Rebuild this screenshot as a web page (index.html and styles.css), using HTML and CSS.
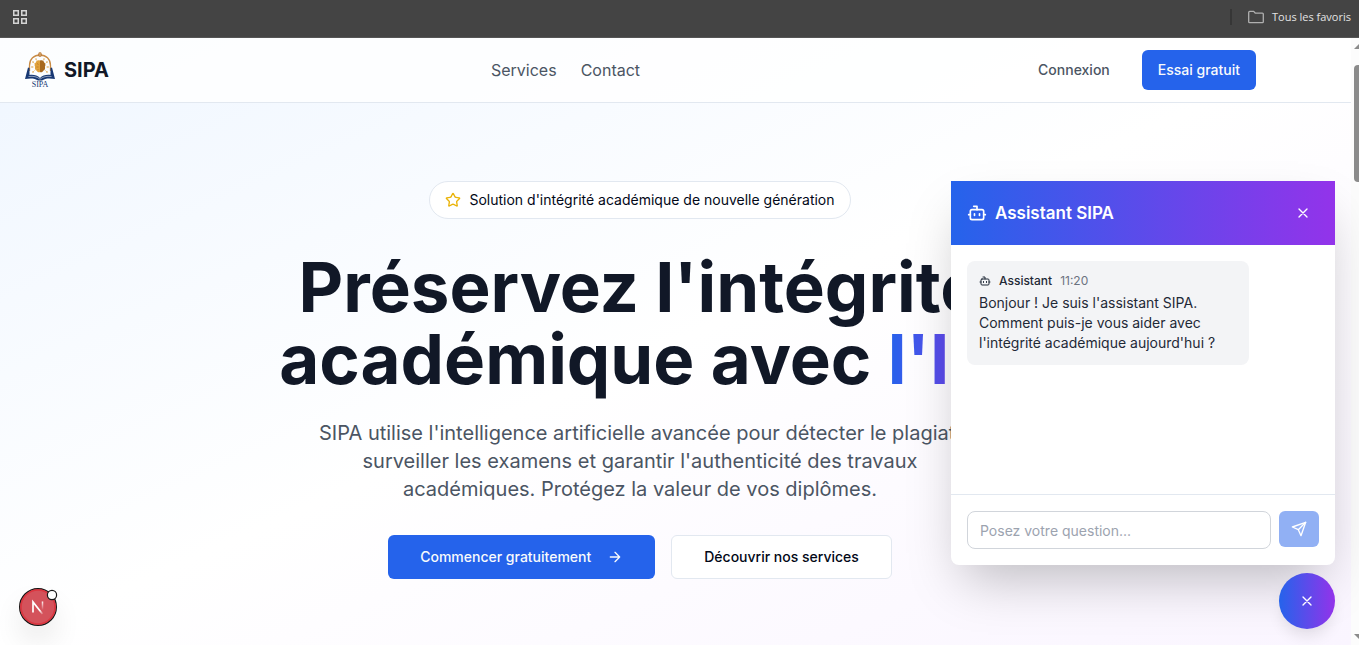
FILE: index.html
```html
<!DOCTYPE html>
<html lang="fr">
<head>
    <meta charset="UTF-8">
    <meta name="viewport" content="width=device-width, initial-scale=1.0">
    <title>SIPA</title>
    <link rel="stylesheet" href="styles.css">
</head>
<body>

<!-- Barre de favoris -->
<div class="bookmarks">
    <button class="bookmark-btn" type="button" aria-label="Groupes d'onglets">
        <svg width="16" height="16" viewBox="0 0 16 16" fill="none" stroke="#d4d4d4" stroke-width="1.5">
            <rect x="1.75" y="1.75" width="4.5" height="4.5"/>
            <rect x="9.75" y="1.75" width="4.5" height="4.5"/>
            <rect x="1.75" y="9.75" width="4.5" height="4.5"/>
            <rect x="9.75" y="9.75" width="4.5" height="4.5"/>
        </svg>
    </button>
    <button class="bookmark-btn bookmark-all" type="button">
        <svg width="16" height="16" viewBox="0 0 16 16" fill="none" stroke="#b0b0b0" stroke-width="1.3" stroke-linejoin="round">
            <path d="M.7 3.4q0-1 1-1h4l1.700 1.800h7q.9 0 .9.900v7.600q0 .9-.9.900H1.600q-.9 0-.9-.900z"/>
        </svg>
        Tous les favoris
    </button>
</div>

<div class="viewport">
    <div class="page">
        <header class="site-header">
            <div class="container header-inner">
                <a class="brand" href="#">
                    <svg class="logo" width="32" height="40" viewBox="0 0 32 40" fill="none">
                        <path d="M5.500 21V15.500C5.500 9 10 5 16 5s10.500 4 10.500 10.500V21" stroke="#c98b45" stroke-width="1.300"/>
                        <ellipse cx="16" cy="4.500" rx="1.800" ry="2.500" fill="#b8783a"/>
                        <path d="M16 2.500v4" stroke="#f0cf94" stroke-width=".8"/>
                        <path d="M9 12l2 2M8 17h2M9 22l2-2M23 12l-2 2M24 17h-2M23 22l-2-2M12 9l1 2M20 9l-1 2" stroke="#e6b96f" stroke-width=".5"/>
                        <g fill="#dda044">
                            <circle cx="9" cy="12" r=".8"/><circle cx="8" cy="17" r=".8"/><circle cx="9" cy="22" r=".8"/>
                            <circle cx="23" cy="12" r=".8"/><circle cx="24" cy="17" r=".8"/><circle cx="23" cy="22" r=".8"/>
                            <circle cx="12" cy="9" r=".7"/><circle cx="20" cy="9" r=".7"/>
                        </g>
                        <path d="M16 10.500c-2-1-4 .3-4.200 2-1.500 1-1.500 3-.7 4.200-.7 1.800.3 3.600 1.700 4 .7 1.500 2.200 1.800 3.200 1.300z" fill="#e0a13c"/>
                        <path d="M16 10.500c2-1 4 .3 4.200 2 1.500 1 1.500 3 .7 4.200.7 1.800-.3 3.600-1.700 4-.7 1.500-2.200 1.800-3.200 1.300z" fill="#a8691f"/>
                        <path d="M13 13.500l1.500 1M12.500 17h2M13.500 20l1-1" stroke="#b87520" stroke-width=".7"/>
                        <path d="M4 17.500L1 29c5-1 10-1 13 1.500h4c3-2.500 8-2.500 13-1.500L28 17.500l-1.500.5v7c-4-.5-8 .3-10.500 3-2.500-2.700-6.500-3.500-10.500-3v-7z" fill="#173873"/>
                        <path d="M4.500 26.500c5-.6 8.500.2 11.500 2.700 3-2.500 6.500-3.300 11.500-2.700" stroke="#fff" stroke-width=".5"/>
                        <text x="16" y="37" class="logo-text" text-anchor="middle">SIPA</text>
                    </svg>
                    <span class="brand-name">SIPA</span>
                </a>
                <nav class="main-nav">
                    <a href="#services">Services</a>
                    <a href="#contact">Contact</a>
                </nav>
                <div class="header-actions">
                    <a class="btn btn-ghost" href="#connexion">Connexion</a>
                    <a class="btn btn-primary" href="#essai">Essai gratuit</a>
                </div>
            </div>
        </header>

        <main class="hero">
            <div class="container hero-inner">
                <div class="hero-badge">
                    <svg width="16" height="16" viewBox="0 0 24 24" fill="none" stroke="#eab308" stroke-width="2" stroke-linecap="round" stroke-linejoin="round">
                        <path d="M11.525 2.295a.53.53 0 0 1 .95 0l2.310 4.679a2.123 2.123 0 0 0 1.595 1.160l5.166.756a.53.53 0 0 1 .294.904l-3.736 3.638a2.123 2.123 0 0 0-.611 1.878l.882 5.140a.53.53 0 0 1-.771.560l-4.618-2.428a2.122 2.122 0 0 0-1.973 0L6.396 21.010a.53.53 0 0 1-.770-.560l.881-5.139a2.122 2.122 0 0 0-.611-1.879L2.160 9.795a.53.53 0 0 1 .294-.906l5.165-.755a2.122 2.122 0 0 0 1.597-1.160z"/>
                    </svg>
                    Solution d'intégrité académique de nouvelle génération
                </div>
                <h1>Préservez l'intégrité académique avec <span class="gradient-text">l'IA</span></h1>
                <p class="hero-text">SIPA utilise l'intelligence artificielle avancée pour détecter le plagiat, surveiller les examens et garantir l'authenticité des travaux académiques. Protégez la valeur de vos diplômes.</p>
                <div class="hero-buttons">
                    <a class="btn btn-lg btn-primary" href="#essai">
                        Commencer gratuitement
                        <svg class="arrow" width="16" height="16" viewBox="0 0 24 24" fill="none" stroke="currentColor" stroke-width="2" stroke-linecap="round" stroke-linejoin="round">
                            <path d="M5 12h14M12 5l7 7-7 7"/>
                        </svg>
                    </a>
                    <a class="btn btn-lg btn-outline" href="#services">Découvrir nos services</a>
                </div>
            </div>
        </main>
    </div>

    <div class="scrollbar">
        <span class="scroll-arrow up"></span>
        <span class="scroll-thumb"></span>
        <span class="scroll-arrow down"></span>
    </div>

    <!-- Assistant -->
    <section class="chat">
        <div class="chat-header">
            <svg width="20" height="20" viewBox="0 0 24 24" fill="none" stroke="currentColor" stroke-width="2" stroke-linecap="round" stroke-linejoin="round">
                <path d="M12 8V4H8"/><rect x="4" y="8" width="16" height="12" rx="2"/><path d="M2 14h2M20 14h2M15 13v2M9 13v2"/>
            </svg>
            <h2>Assistant SIPA</h2>
            <button class="chat-close" type="button" aria-label="Fermer">
                <svg width="16" height="16" viewBox="0 0 24 24" fill="none" stroke="currentColor" stroke-width="2" stroke-linecap="round">
                    <path d="M18 6 6 18M6 6l12 12"/>
                </svg>
            </button>
        </div>
        <div class="chat-messages">
            <div class="message">
                <div class="message-meta">
                    <svg width="12" height="12" viewBox="0 0 24 24" fill="none" stroke="currentColor" stroke-width="2" stroke-linecap="round" stroke-linejoin="round">
                        <path d="M12 8V4H8"/><rect x="4" y="8" width="16" height="12" rx="2"/><path d="M2 14h2M20 14h2M15 13v2M9 13v2"/>
                    </svg>
                    <strong>Assistant</strong>
                    <time>11:20</time>
                </div>
                <p>Bonjour ! Je suis l'assistant SIPA. Comment puis-je vous aider avec l'intégrité académique aujourd'hui ?</p>
            </div>
        </div>
        <form class="chat-form">
            <input type="text" name="question" placeholder="Posez votre question..." aria-label="Posez votre question">
            <button type="submit" disabled aria-label="Envoyer">
                <svg width="16" height="16" viewBox="0 0 24 24" fill="none" stroke="currentColor" stroke-width="2" stroke-linecap="round" stroke-linejoin="round">
                    <path d="m22 2-7 20-4-9-9-4Z"/><path d="M22 2 11 13"/>
                </svg>
            </button>
        </form>
    </section>
    <button class="chat-toggle" type="button" aria-label="Fermer l'assistant">
        <svg width="16" height="16" viewBox="0 0 24 24" fill="none" stroke="currentColor" stroke-width="2" stroke-linecap="round">
            <path d="M18 6 6 18M6 6l12 12"/>
        </svg>
    </button>

    <button class="dev-badge" type="button" aria-label="Outils Next.js">
        <svg width="38" height="38" viewBox="0 0 38 38" fill="none">
            <defs>
                <linearGradient id="fadeA" x1="17" y1="18" x2="24" y2="27" gradientUnits="userSpaceOnUse">
                    <stop offset="0.5" stop-color="#fff"/><stop offset="1" stop-color="#fff" stop-opacity="0"/>
                </linearGradient>
                <linearGradient id="fadeB" x1="23" y1="13" x2="23" y2="22" gradientUnits="userSpaceOnUse">
                    <stop stop-color="#fff"/><stop offset="1" stop-color="#fff" stop-opacity="0"/>
                </linearGradient>
            </defs>
            <circle cx="19" cy="19" r="18.400" fill="#d4525b" stroke="#171717" stroke-width="1.200"/>
            <circle cx="19" cy="19" r="17" stroke="#dc3640" stroke-width="1.600"/>
            <path d="M14 24.500V14l9.500 12" stroke="url(#fadeA)" stroke-width="1.700"/>
            <path d="M23.500 13.500v9" stroke="url(#fadeB)" stroke-width="1.500"/>
            <circle cx="33" cy="7" r="4.600" fill="#fff" stroke="#171717" stroke-width="1.200"/>
        </svg>
    </button>
</div>

</body>
</html>
```

FILE: styles.css
```css
* {
    box-sizing: border-box;
}
body {
    margin: 0;
    height: 100vh;
    display: flex;
    flex-direction: column;
    overflow: hidden;
    font-family: 'Inter', sans-serif;
    color: #111827;
}
h1, h2, p {
    margin: 0;
}
a {
    color: inherit;
    text-decoration: none;
}
button {
    font-family: inherit;
    border: none;
    cursor: pointer;
}
svg {
    flex-shrink: 0;
    overflow: visible;
}

/* Barre de favoris */
.bookmarks {
    display: flex;
    align-items: center;
    justify-content: space-between;
    height: 38px;
    padding: 0 8px 4px 12px;
    background-color: #444;
    border-bottom: 1px solid #555;
}
.bookmark-btn {
    display: flex;
    align-items: center;
    gap: 8px;
    padding: 0;
    background: none;
    color: #e3e3e3;
}
.bookmark-all {
    font-family: 'Open Sans', 'Noto Sans', sans-serif;
    font-size: 11px;
    line-height: 16px;
    padding-left: 16px;
    border-left: 2px solid #363636;
}

.viewport {
    position: relative;
    flex: 1;
    min-height: 0;
    display: flex;
}
.page {
    flex: 1;
    overflow: hidden;
    background: linear-gradient(to bottom right, #eff6ff, #fff 50%, #faf5ff);
}
.container {
    max-width: 1280px;
    padding: 0 24px;
}

/* En-tete */
.site-header {
    background-color: rgba(255, 255, 255, 0.8);
    border-bottom: 1px solid #e2e8f0;
}
.header-inner {
    display: flex;
    align-items: center;
    justify-content: space-between;
    height: 64px;
}
.brand {
    display: flex;
    align-items: center;
    gap: 8px;
}
.logo-text {
    font-family: 'Liberation Serif', serif;
    font-size: 8px;
    fill: #173873;
}
.brand-name {
    font-size: 20px;
    line-height: 28px;
    font-weight: 700;
}
.main-nav {
    display: flex;
    gap: 24px;
    font-size: 16px;
    line-height: 24px;
    color: #4b5563;
}
.header-actions {
    display: flex;
    gap: 16px;
}
.btn {
    display: inline-flex;
    align-items: center;
    justify-content: center;
    height: 40px;
    padding: 0 16px;
    border-radius: 6px;
    font-size: 14px;
    line-height: 20px;
    font-weight: 500;
}
.btn-lg {
    height: 44px;
    padding: 0 32px;
}
.btn-ghost {
    color: #4b5563;
}
.btn-primary {
    background-color: #2563eb;
    color: #f8fafc;
}
.btn-outline {
    background-color: #fff;
    border: 1px solid #e2e8f0;
    color: #020817;
}

/* Accueil */
.hero-inner {
    display: flex;
    flex-direction: column;
    align-items: center;
    padding-top: 78px;
    text-align: center;
}
.hero-badge {
    display: flex;
    align-items: center;
    gap: 8px;
    padding: 8px 15px;
    margin-bottom: 32px;
    background-color: #fff;
    border: 1px solid #e2e8f0;
    border-radius: 20px;
    font-size: 14px;
    line-height: 20px;
    color: #020817;
}
h1 {
    max-width: 800px;
    margin-bottom: 24px;
    font-size: 69px;
    line-height: 72px;
    font-weight: 700;
}
.gradient-text {
    background: linear-gradient(to right, #2563eb, #9333ea);
    -webkit-background-clip: text;
    background-clip: text;
    color: transparent;
}
.hero-text {
    max-width: 672px;
    margin-bottom: 32px;
    font-size: 20px;
    line-height: 28px;
    color: #4b5563;
}
.hero-buttons {
    display: flex;
    gap: 16px;
}
.arrow {
    margin-left: 16px;
}

/* Barre de defilement */
.scrollbar {
    display: flex;
    flex-direction: column;
    width: 8px;
    padding: 6px 0 6px 3px;
    overflow: hidden;
    background-color: #fcfcfc;
}
.scroll-arrow {
    width: 10px;
    height: 5px;
    background-color: #8b8b8b;
}
.scroll-arrow.up {
    clip-path: polygon(50% 0, 100% 100%, 0 100%);
}
.scroll-arrow.down {
    margin-top: auto;
    clip-path: polygon(0 0, 100% 0, 50% 100%);
}
.scroll-thumb {
    width: 8px;
    height: 117px;
    margin-top: 16px;
    border-radius: 4px;
    background-color: #8b8b8b;
}

/* Assistant */
.chat {
    position: absolute;
    right: 24px;
    bottom: 80px;
    display: flex;
    flex-direction: column;
    width: 384px;
    height: 384px;
    background-color: #fff;
    border-radius: 0 0 8px 8px;
    box-shadow: 0 25px 50px -12px rgba(0, 0, 0, 0.25);
}
.chat-header {
    display: flex;
    align-items: center;
    gap: 8px;
    height: 64px;
    padding: 0 16px;
    background: linear-gradient(to right, #2563eb, #9333ea);
    color: #fff;
}
.chat-header h2 {
    flex: 1;
    font-size: 17px;
    line-height: 28px;
    font-weight: 600;
}
.chat-close {
    display: flex;
    padding: 8px;
    background: none;
    color: #fff;
}
.chat-messages {
    flex: 1;
    padding: 16px;
}
.message {
    max-width: 80%;
    padding: 12px;
    background-color: #f3f4f6;
    border-radius: 8px;
    color: #1f2937;
}
.message-meta {
    display: flex;
    align-items: center;
    gap: 8px;
    margin-bottom: 4px;
    font-size: 12px;
    line-height: 16px;
}
.message-meta strong {
    font-weight: 500;
}
.message-meta time {
    color: #6b7280;
}
.message p {
    font-size: 14px;
    line-height: 20px;
}
.chat-form {
    display: flex;
    gap: 8px;
    padding: 16px;
    border-top: 1px solid #e2e8f0;
}
.chat-form input {
    flex: 1;
    min-width: 0;
    height: 38px;
    padding: 0 12px;
    border: 1px solid #d1d5db;
    border-radius: 8px;
    font-family: inherit;
    font-size: 14px;
}
.chat-form input::placeholder {
    color: #9ca3af;
}
.chat-form button {
    display: flex;
    align-items: center;
    justify-content: center;
    width: 40px;
    height: 36px;
    padding: 0;
    border-radius: 6px;
    background-color: #2563eb;
    color: #fff;
    opacity: 0.5;
}
.chat-form button svg {
    stroke-width: 2;
}
.chat-toggle {
    position: absolute;
    right: 24px;
    bottom: 16px;
    display: flex;
    align-items: center;
    justify-content: center;
    width: 56px;
    height: 56px;
    padding: 0;
    border-radius: 50%;
    background: linear-gradient(to right, #2563eb, #9333ea);
    box-shadow: 0 10px 15px -3px rgba(0, 0, 0, 0.1);
    color: #fff;
}

.dev-badge {
    position: absolute;
    left: 19px;
    bottom: 19px;
    width: 38px;
    height: 38px;
    padding: 0;
    border-radius: 50%;
    background: none;
    box-shadow: 0 16px 32px -8px rgba(0, 0, 0, 0.24);
}
```
